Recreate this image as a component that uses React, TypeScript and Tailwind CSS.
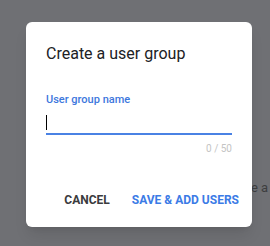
export default function App() {
  return (
    <div
      className="relative h-[246px] w-[270px] overflow-hidden bg-[#6f7074]"
      style={{ fontFamily: "Roboto, 'Liberation Sans', sans-serif" }}
    >
      {/* page text peeking behind the dialog */}
      <div className="pl-[220px] pt-[180px] text-[13px] leading-4 text-[#3d3e40]">Create a</div>

      {/* Dialog */}
      <div className="absolute left-[26px] top-[22px] flex h-[205px] w-[226px] flex-col rounded-[6px] bg-white px-5 shadow-lg">
        <h2 className="pt-[20px] text-[16px] leading-6 text-[#202124]">Create a user group</h2>

        <label className="mt-[26px] text-[11px] font-medium leading-4 text-[#3d77dd]">User group name</label>
        <div className="flex h-[27px] items-end border-b-2 border-[#4a82e4] pb-[3px]">
          <span className="h-[15px] w-px bg-black" />
        </div>
        <div className="pt-[8px] text-right text-[10px] leading-3 text-[#c4c4c4]">0 / 50</div>

        <div className="mt-auto flex items-center justify-end gap-[22px] pb-[18px] text-[12px] font-bold">
          <button className="text-[#3a3b3d]">CANCEL</button>
          <button className="-mr-[7px] text-[#3b7be6]">SAVE &amp; ADD USERS</button>
        </div>
      </div>
    </div>
  );
}
